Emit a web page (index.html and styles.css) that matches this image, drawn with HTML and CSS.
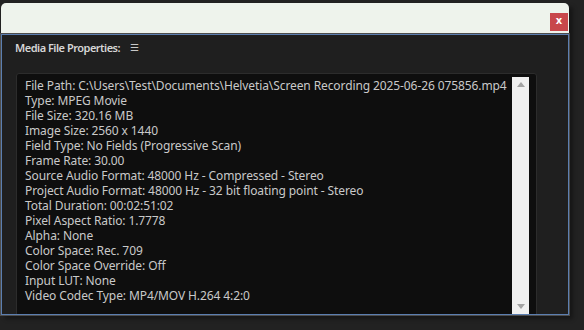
FILE: index.html
```html
<!DOCTYPE html>
<html lang="en">
<head>
    <meta charset="UTF-8">
    <title>Media File Properties</title>
    <link rel="stylesheet" href="styles.css">
</head>
<body>
    <div class="window">
        <div class="titlebar">
            <button class="close">x</button>
        </div>
        <div class="panel">
            <div class="panel-header">
                <span class="panel-title">Media File Properties:</span>
                <span class="menu">&#9776;</span>
            </div>
            <div class="info-box">
                <div class="info-text">
                    <div>File Path: C:\Users\Test\Documents\Helvetia\Screen Recording 2025-06-26 075856.mp4</div>
                    <div>Type: MPEG Movie</div>
                    <div>File Size: 320.16 MB</div>
                    <div>Image Size: 2560 x 1440</div>
                    <div>Field Type: No Fields (Progressive Scan)</div>
                    <div>Frame Rate: 30.00</div>
                    <div>Source Audio Format: 48000 Hz - Compressed - Stereo</div>
                    <div>Project Audio Format: 48000 Hz - 32 bit floating point - Stereo</div>
                    <div>Total Duration: 00:02:51:02</div>
                    <div>Pixel Aspect Ratio: 1.7778</div>
                    <div>Alpha: None</div>
                    <div>Color Space: Rec. 709</div>
                    <div>Color Space Override: Off</div>
                    <div>Input LUT: None</div>
                    <div>Video Codec Type: MP4/MOV H.264 4:2:0</div>
                </div>
                <div class="scrollbar">
                    <span class="arrow up"></span>
                    <span class="arrow down"></span>
                </div>
            </div>
        </div>
    </div>
</body>
</html>
```

FILE: styles.css
```css
body {
    margin: 0;
    background-color: #222222;
    font-family: "Noto Sans", "Open Sans", sans-serif;
    height: 330px;
    overflow: hidden;
}
.window {
    margin: 3px 0 0 1px;
    width: 568px;
    box-shadow: 4px 4px 4px rgba(0, 0, 0, 0.35);
}
.titlebar {
    height: 31px;
    background-color: #eef3ec;
    border-radius: 5px 5px 0 0;
    display: flex;
    justify-content: flex-end;
    align-items: center;
    padding-right: 1px;
}
.close {
    width: 18px;
    height: 18px;
    margin-top: 6px;
    padding: 0 0 2px 0;
    border: none;
    background-color: #c8474b;
    color: #ffffff;
    font-family: "DejaVu Sans", sans-serif;
    font-weight: bold;
    font-size: 10px;
    line-height: 16px;
}
.panel {
    height: 279px;
    border: 1px solid #5b7eb0;
    outline: 1px solid #4d4d4d;
    background-color: #1f1f1f;
    overflow: hidden;
}
.panel-header {
    height: 24px;
    display: flex;
    align-items: center;
    padding-left: 13px;
    color: #d6d6d6;
}
.panel-title {
    font-size: 11px;
    font-weight: 600;
    letter-spacing: -0.5px;
}
.menu {
    margin-left: 10px;
    font-size: 10px;
    color: #c8c8c8;
}
.info-box {
    margin: 14px 0 0 14px;
    width: 519px;
    height: 260px;
    border: 1px solid #2c2c2c;
    border-radius: 3px;
    background-color: #0e0e0e;
    display: flex;
}
.info-text {
    flex: 1;
    padding: 4px 0 0 8px;
    font-size: 12px;
    line-height: 15px;
    letter-spacing: -0.1px;
    color: #c9c9c9;
    white-space: nowrap;
    overflow: hidden;
}
.scrollbar {
    width: 17px;
    height: 237px;
    margin: 3px 7px 0 0;
    background-color: #f0f0f0;
    display: flex;
    flex-direction: column;
    justify-content: space-between;
    align-items: center;
    padding: 5px 0 5px 0;
    box-sizing: border-box;
}
.arrow {
    width: 0;
    height: 0;
    border-left: 4px solid transparent;
    border-right: 4px solid transparent;
}
.arrow.up {
    border-bottom: 5px solid #a3a3a3;
}
.arrow.down {
    border-top: 5px solid #a3a3a3;
}
```
